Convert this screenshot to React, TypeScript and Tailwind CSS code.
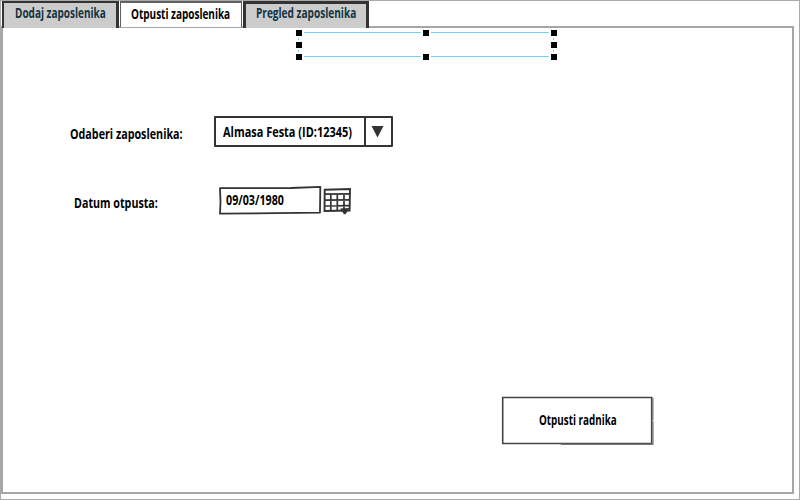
import { useLayoutEffect, useRef, useState } from "react";

/** Condensed label: squeezes its text horizontally to the given width. */
function Label({ text, width, className = "" }: { text: string; width: number; className?: string }) {
  const ref = useRef<HTMLSpanElement>(null);
  const [scale, setScale] = useState(0.8);
  useLayoutEffect(() => {
    if (ref.current) setScale(width / ref.current.offsetWidth);
  }, [text, width]);
  return (
    <span className={`block shrink-0 text-[13.5px] leading-5 whitespace-nowrap ${className}`} style={{ width }}>
      <span ref={ref} className="inline-block origin-left" style={{ transform: `scaleX(${scale})` }}>
        {text}
      </span>
    </span>
  );
}

function Tabs() {
  return (
    <div className="relative z-10 flex h-[27px] items-start pl-px">
      <div className="h-[27px] w-[117px] border-t-2 border-r-[3px] border-l-2 border-[#333] bg-[#ccc] pl-[11px]">
        <Label text="Dodaj zaposlenika" width={91} className="text-[#12333f]" />
      </div>
      <div className="ml-px h-[26px] w-[122px] border-t-2 border-r border-l border-[#606060] bg-white pl-[10px]">
        <Label text="Otpusti zaposlenika" width={99} className="mt-px text-black" />
      </div>
      <div className="ml-px h-[27px] w-[126px] border-t-3 border-r-[3px] border-l-[3px] border-[#333] bg-[#ccc] pl-[10px]">
        <Label text="Pregled zaposlenika" width={100} className="-mt-px text-[#12333f]" />
      </div>
    </div>
  );
}

function Selection() {
  const handles = [
    [0, 0], [127, 0], [255, 0], [0, 12], [255, 12], [0, 24], [127, 24], [255, 24],
  ];
  return (
    <svg className="ml-[291px] block shrink-0" width="261" height="30" viewBox="0 0 261 30" shapeRendering="crispEdges">
      <path
        d="M8 2.5H125M135 2.5H253M8 26.5H125M135 26.5H253M2.5 8V10M2.5 20V22M257.5 8V10M257.5 20V22"
        stroke="#6fcff6"
        fill="none"
      />
      {handles.map(([x, y]) => (
        <rect key={`${x}-${y}`} x={x} y={y} width="6" height="6" fill="#000" />
      ))}
    </svg>
  );
}

function CalendarIcon() {
  return (
    <svg className="block" width="30" height="30" viewBox="0 0 30 30" fill="none" stroke="#333" strokeWidth="1.9">
      <path d="M2.7 4.8L28 4L27.6 25.5L2.5 26Z" />
      <path d="M2.5 9.2L28 8.8M2.5 15.2L28 14.8M2.5 21L28 20.6M8.8 9V26M15.3 9V26M22 9V26" strokeWidth="1.7" />
      <path d="M18 23.5L27.5 23L23.5 29.3H22Z" fill="#333" stroke="none" />
    </svg>
  );
}

export default function App() {
  return (
    <div className="flex h-[500px] w-[800px] flex-col border border-[#aaa] bg-white pr-[5px] pb-[5px] font-['Open_Sans','Noto_Sans',sans-serif] font-bold text-black">
      <Tabs />
      <main className="-mt-0.5 flex flex-1 flex-col border-2 border-[#a6a6a6] pt-0.5 pl-0.5">
        <Selection />
        <div className="mt-[56px] flex items-start pl-[65px]">
          <Label text="Odaberi zaposlenika:" width={113} className="mt-[8px]" />
          <div className="ml-[31px] flex h-[31px] w-[179px] rounded-[1px] border-2 border-[#333]">
            <div className="w-[150px] border-r-2 border-[#333] pt-1 pl-[7px]">
              <Label text="Almasa Festa (ID:12345)" width={129} />
            </div>
            <svg className="mt-[7px] ml-[5px]" width="13" height="13" viewBox="0 0 13 13">
              <path d="M0.5 1H12.5L6.5 12.5Z" fill="#333" />
            </svg>
          </div>
        </div>
        <div className="mt-[38px] flex items-start pl-[69px]">
          <Label text="Datum otpusta:" width={84} className="mt-[8px]" />
          <div className="ml-[60px] grid">
            <svg className="col-start-1 row-start-1" width="104" height="30" viewBox="0 0 104 30" fill="none" stroke="#333" strokeWidth="1.8">
              <path d="M2 3.2L73 3L102.3 1.9L102 27.6L2 28.7L2.5 17Z" strokeLinejoin="round" />
            </svg>
            <div className="col-start-1 row-start-1 pt-[5px] pl-[8px]">
              <Label text="09/03/1980" width={58} />
            </div>
          </div>
          <CalendarIcon />
        </div>
        <button className="mt-[181px] ml-[496px] grid self-start">
          <svg className="col-start-1 row-start-1" width="153" height="49" viewBox="0 0 153 49" fill="none" stroke="#444" strokeWidth="1.6">
            <path d="M1.7 1.5H150.7V47.5H1.7Z" />
            <path d="M151.9 2V24M152 25V48.3H60" stroke="#777" strokeWidth="1.2" />
          </svg>
          <Label text="Otpusti radnika" width={78} className="col-start-1 row-start-1 mt-[14px] ml-[38px] text-left" />
        </button>
      </main>
    </div>
  );
}
